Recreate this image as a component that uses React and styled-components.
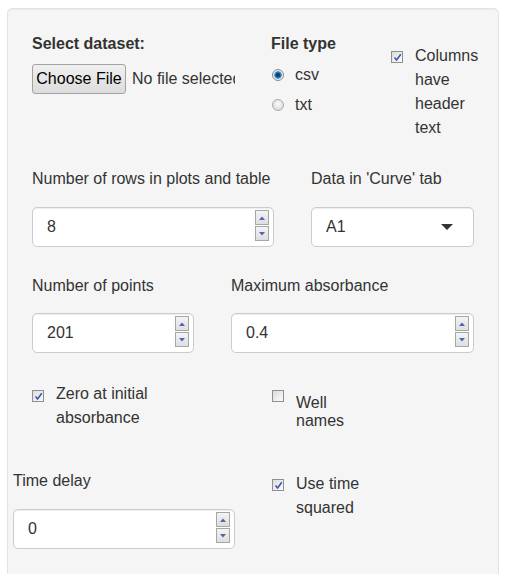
import React from "react";
import styled, { createGlobalStyle } from "styled-components";

const GlobalStyle = createGlobalStyle`
  body {
    margin: 0;
    background: #fff;
    font-family: "Liberation Sans", Arial, sans-serif;
    font-size: 16px;
    color: #333;
  }
`;

const Panel = styled.div`
  box-sizing: border-box;
  width: 492px;
  height: 570px;
  margin: 8px 0 0 7px;
  background: #f5f5f5;
  border: 1px solid #e3e3e3;
  border-radius: 5px;
  box-shadow: inset 0 1px 1px rgba(0, 0, 0, 0.05);
  overflow: hidden;
`;

const Row = styled.div`
  display: flex;
  align-items: flex-start;
  margin-top: ${(p) => p.top}px;
  padding-left: ${(p) => (p.left != null ? p.left : 24)}px;
  column-gap: ${(p) => p.gap || 0}px;
`;

const Col = styled.div`
  display: flex;
  flex-direction: column;
  width: ${(p) => (p.width ? `${p.width}px` : "auto")};
  flex-shrink: 0;
  margin-top: ${(p) => p.top || 0}px;
`;

const Label = styled.div`
  line-height: 20px;
  height: 20px;
  font-weight: ${(p) => (p.bold ? 700 : 400)};
  white-space: nowrap;
  margin-bottom: ${(p) => p.gap || 0}px;
`;

const FileRow = styled.div`
  display: flex;
  align-items: center;
  width: 203px;
  overflow: hidden;
  white-space: nowrap;
`;

const FileButton = styled.button`
  box-sizing: border-box;
  width: 94px;
  height: 30px;
  padding: 0;
  flex-shrink: 0;
  font-family: inherit;
  font-size: 16px;
  color: #000;
  border: 1px solid #a3a3a3;
  border-radius: 3px;
  background: linear-gradient(#f0f0f0, #dcdcdc);
`;

const FileName = styled.span`
  margin-left: 6px;
  color: #333;
`;

const OptionList = styled.div`
  display: flex;
  flex-direction: column;
  row-gap: 6px;
  margin-top: 9px;
`;

const Option = styled.div`
  display: flex;
  align-items: center;
  height: 24px;
  column-gap: 11px;
  padding-left: 1px;
`;

const Radio = styled.span`
  box-sizing: border-box;
  width: 12px;
  height: 12px;
  border-radius: 50%;
  border: 1px solid ${(p) => (p.checked ? "#8a8a8a" : "#aaaaaa")};
  background: ${(p) =>
    p.checked
      ? "radial-gradient(circle, #0a3c6e 0 1.5px, #1d7ec2 2.6px, #2b8ad0 3.4px, #ececec 4px)"
      : "radial-gradient(circle at 50% 40%, #fbfbfb, #d2d2d2)"};
`;

const Check = styled.div`
  display: flex;
  align-items: flex-start;
  column-gap: 12px;
`;

const Box = styled.span`
  box-sizing: border-box;
  flex-shrink: 0;
  width: 12px;
  height: 12px;
  margin-top: ${(p) => p.offset}px;
  border: 1px solid #8f8f8f;
  background: linear-gradient(135deg, #dcdcdc, #fbfbfb);
  display: flex;
  align-items: center;
  justify-content: center;
`;

const CheckText = styled.div`
  width: ${(p) => p.width}px;
  line-height: ${(p) => p.lh || 24}px;
  margin-top: ${(p) => p.top || 0}px;
`;

const Field = styled.div`
  box-sizing: border-box;
  display: flex;
  align-items: flex-start;
  width: ${(p) => p.width}px;
  height: 40px;
  background: #fff;
  border: 1px solid #ccc;
  border-radius: 5px;
  box-shadow: inset 0 1px 1px rgba(0, 0, 0, 0.075);
`;

const FieldValue = styled.span`
  flex: 1;
  align-self: center;
  padding-left: 14px;
  color: #333;
`;

const Spinner = styled.div`
  display: flex;
  flex-direction: column;
  margin: 2px 4px 0 0;
`;

const SpinHalf = styled.span`
  box-sizing: border-box;
  width: 14px;
  height: 15px;
  margin-top: ${(p) => (p.down ? 1 : 0)}px;
  border: 1px solid #a6a6a6;
  background: linear-gradient(#f4f4f4, #dedede);
  display: flex;
  align-items: center;
  justify-content: center;
`;

const Caret = styled.span`
  align-self: center;
  width: 0;
  height: 0;
  margin-right: 20px;
  border-left: 6px solid transparent;
  border-right: 6px solid transparent;
  border-top: 6px solid #333;
`;

function Tick() {
  return (
    <svg width="9" height="9" viewBox="0 0 9 9">
      <path d="M1.5 4.5 L3.6 7 L7.8 1.2" fill="none" stroke="#3f56b0" strokeWidth="1.6" />
    </svg>
  );
}

function Arrow({ down }) {
  return (
    <svg width="6" height="4" viewBox="0 0 6 4">
      <path d={down ? "M0 0 H6 L3 3.5 Z" : "M0 4 H6 L3 0.5 Z"} fill="#5063b8" />
    </svg>
  );
}

function CheckBox({ checked, offset, children, width, lh, textTop }) {
  return (
    <Check>
      <Box offset={offset}>{checked ? <Tick /> : null}</Box>
      <CheckText width={width} lh={lh} top={textTop}>
        {children}
      </CheckText>
    </Check>
  );
}

function NumberInput({ value, width }) {
  return (
    <Field width={width}>
      <FieldValue>{value}</FieldValue>
      <Spinner>
        <SpinHalf>
          <Arrow />
        </SpinHalf>
        <SpinHalf down>
          <Arrow down />
        </SpinHalf>
      </Spinner>
    </Field>
  );
}

function SelectInput({ value, width }) {
  return (
    <Field width={width}>
      <FieldValue>{value}</FieldValue>
      <Caret />
    </Field>
  );
}

export default function App() {
  return (
    <>
      <GlobalStyle />
      <Panel>
        <Row top={25}>
          <Col width={239}>
            <Label bold gap={10}>
              Select dataset:
            </Label>
            <FileRow>
              <FileButton>Choose File</FileButton>
              <FileName>No file selected</FileName>
            </FileRow>
          </Col>
          <Col width={120}>
            <Label bold>File type</Label>
            <OptionList>
              <Option>
                <Radio checked />
                <span>csv</span>
              </Option>
              <Option>
                <Radio />
                <span>txt</span>
              </Option>
            </OptionList>
          </Col>
          <Col top={10}>
            <CheckBox checked offset={7} width={70}>
              Columns have header text
            </CheckBox>
          </Col>
        </Row>

        <Row top={29} gap={37}>
          <Col width={242}>
            <Label gap={18}>Number of rows in plots and table</Label>
            <NumberInput value="8" width={242} />
          </Col>
          <Col width={163}>
            <Label gap={18}>Data in 'Curve' tab</Label>
            <SelectInput value="A1" width={163} />
          </Col>
        </Row>

        <Row top={29} gap={37}>
          <Col width={162}>
            <Label gap={17}>Number of points</Label>
            <NumberInput value="201" width={162} />
          </Col>
          <Col width={243}>
            <Label gap={17}>Maximum absorbance</Label>
            <NumberInput value="0.4" width={243} />
          </Col>
        </Row>

        <Row top={29}>
          <Col width={240}>
            <CheckBox checked offset={8} width={120}>
              Zero at initial absorbance
            </CheckBox>
          </Col>
          <Col>
            <CheckBox offset={8} width={60} lh={18} textTop={12}>
              Well names
            </CheckBox>
          </Col>
        </Row>

        <Row top={41} left={5} gap={37}>
          <Col width={222}>
            <Label gap={18}>Time delay</Label>
            <NumberInput value="0" width={222} />
          </Col>
          <Col top={1}>
            <CheckBox checked offset={7} width={80}>
              Use time squared
            </CheckBox>
          </Col>
        </Row>
      </Panel>
    </>
  );
}
